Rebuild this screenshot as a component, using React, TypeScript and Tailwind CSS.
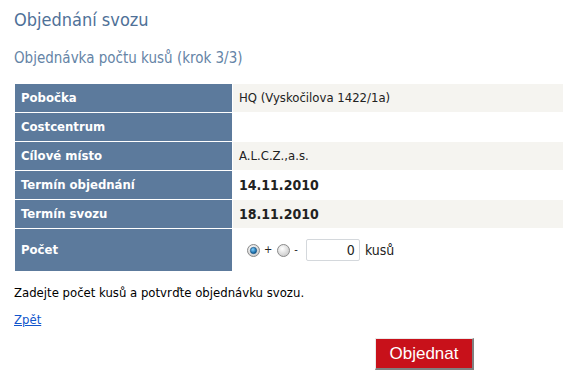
import React from 'react'

const rows: { label: string; value: string; bold?: boolean }[] = [
  { label: 'Pobočka', value: 'HQ (Vyskočilova 1422/1a)' },
  { label: 'Costcentrum', value: '' },
  { label: 'Cílové místo', value: 'A.L.C.Z.,a.s.' },
  { label: 'Termín objednání', value: '14.11.2010', bold: true },
  { label: 'Termín svozu', value: '18.11.2010', bold: true },
]

function Radio({ checked }: { checked?: boolean }) {
  return (
    <svg width="13" height="13" viewBox="0 0 13 13">
      <defs>
        <radialGradient id={checked ? 'rOn' : 'rOff'} cx="40%" cy="35%" r="70%">
          <stop offset="0%" stopColor="#ffffff" />
          <stop offset="100%" stopColor="#c8c8c8" />
        </radialGradient>
        <radialGradient id="dot" cx="40%" cy="35%" r="60%">
          <stop offset="0%" stopColor="#7fd0ff" />
          <stop offset="100%" stopColor="#0b5d9a" />
        </radialGradient>
      </defs>
      <circle cx="6.5" cy="6.5" r="6" fill={`url(#${checked ? 'rOn' : 'rOff'})`} stroke="#8a8a8a" />
      {checked && <circle cx="6.5" cy="6.5" r="3.2" fill="url(#dot)" stroke="#1c4f7a" strokeWidth="0.6" />}
    </svg>
  )
}

export default function App() {
  return (
    <div
      className="w-[571px] h-[377px] bg-white overflow-hidden pl-[14px] pt-[9px]"
      style={{ fontFamily: '"DejaVu Sans Condensed", "DejaVu Sans", sans-serif' }}
    >
      {/* Nadpis */}
      <h1 className="text-[18px] leading-[22px] text-[#4f7198]">Objednání svozu</h1>
      <h2 className="mt-[18px] text-[15px] leading-[18px] text-[#6584a6]">
        Objednávka počtu kusů (krok 3/3)
      </h2>

      {/* Tabulka */}
      <div className="mt-[17px] ml-px w-[548px] grid grid-cols-[217px_330px] gap-px bg-white text-[13px]">
        {rows.map((r, i) => (
          <React.Fragment key={r.label}>
            <div className="h-[28px] bg-[#5c7a9c] text-white font-bold flex items-center pl-[6px]">
              {r.label}
            </div>
            <div
              className={`h-[28px] flex items-center pl-[6px] text-[#222] ${
                i % 2 === 0 ? 'bg-[#f5f4f0]' : 'bg-white'
              } ${r.bold ? 'font-bold text-[14px]' : ''}`}
            >
              {r.value}
            </div>
          </React.Fragment>
        ))}
        <div className="h-[42px] bg-[#5c7a9c] text-white font-bold flex items-center pl-[6px]">
          Počet
        </div>
        <div className="h-[42px] bg-white flex items-center pl-[14px] text-[#222]">
          <Radio checked />
          <span className="ml-[4px] text-[11px]">+</span>
          <span className="ml-[5px] flex">
            <Radio />
          </span>
          <span className="ml-[4px] text-[11px]">-</span>
          <input
            readOnly
            value="0"
            className="ml-[8px] w-[54px] h-[22px] border border-[#d4d8dc] rounded-[2px] text-right pr-[4px] text-[14px] text-[#222] outline-none"
          />
          <span className="ml-[5px] text-[14px]">kusů</span>
        </div>
      </div>

      <p className="mt-[12px] text-[13px] text-black">Zadejte počet kusů a potvrďte objednávku svozu.</p>
      <a href="#" className="block mt-[7px] text-[13px] text-[#1155cc] underline w-fit">
        Zpět
      </a>

      <div className="mt-[9px] ml-[361px]">
        <button
          className="w-[99px] h-[32px] bg-[#c8111a] text-white text-[17px] border border-t-[#e9e9e9] border-l-[#e9e9e9] border-r-[#808080] border-b-[#808080] border-r-2 border-b-2"
          style={{ fontFamily: '"Liberation Sans", Arial, sans-serif' }}
        >
          Objednat
        </button>
      </div>
    </div>
  )
}
